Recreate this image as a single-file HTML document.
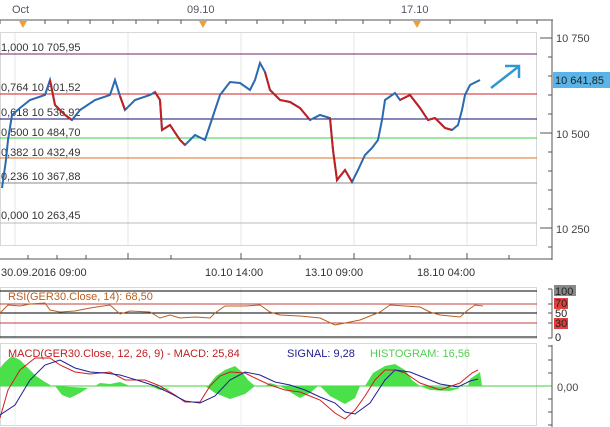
<!DOCTYPE html>
<html><head><meta charset="utf-8"><style>
body{margin:0;background:#fff;width:610px;height:427px;overflow:hidden}
svg{display:block}
text{font-family:"Liberation Sans","DejaVu Sans",sans-serif;font-size:11px}
</style></head><body>
<svg width="610" height="427" viewBox="0 0 610 427">
<!-- top axis -->
<text x="12" y="13" fill="#556">Oct</text>
<text x="187" y="13" fill="#556">09.10</text>
<text x="401" y="13" fill="#556">17.10</text>
<line x1="0" y1="20" x2="553" y2="20" stroke="#555"/>
<line x1="552" y1="20" x2="552" y2="260" stroke="#555"/>
<g stroke="#555">
<line x1="45" y1="20" x2="45" y2="24"/><line x1="68" y1="20" x2="68" y2="24"/><line x1="90" y1="20" x2="90" y2="24"/><line x1="113" y1="20" x2="113" y2="24"/><line x1="136" y1="20" x2="136" y2="24"/><line x1="158" y1="20" x2="158" y2="24"/><line x1="181" y1="20" x2="181" y2="24"/><line x1="226" y1="20" x2="226" y2="24"/><line x1="257" y1="20" x2="257" y2="24"/><line x1="283" y1="20" x2="283" y2="24"/><line x1="305" y1="20" x2="305" y2="24"/><line x1="336" y1="20" x2="336" y2="24"/><line x1="363" y1="20" x2="363" y2="24"/><line x1="390" y1="20" x2="390" y2="24"/><line x1="450" y1="20" x2="450" y2="24"/><line x1="485" y1="20" x2="485" y2="24"/><line x1="517" y1="20" x2="517" y2="24"/><line x1="537" y1="20" x2="537" y2="24"/>
<line x1="0" y1="20" x2="0" y2="24"/>
</g>
<g fill="#f0a030"><path d="M19 21h8l-4 7z"/><path d="M199 21h8l-4 7z"/><path d="M413 21h8l-4 7z"/></g>
<!-- main panel -->
<rect x="0.5" y="32.5" width="536" height="213" fill="#fff" stroke="#d8d8d8"/>
<g stroke="#e4e4e4"><line x1="15" y1="33" x2="15" y2="245"/><line x1="128" y1="33" x2="128" y2="245"/><line x1="241" y1="33" x2="241" y2="245"/><line x1="354" y1="33" x2="354" y2="245"/><line x1="467" y1="33" x2="467" y2="245"/></g>
<line x1="0" y1="54" x2="537" y2="54" stroke="#702070"/>
<line x1="0" y1="94" x2="537" y2="94" stroke="#d02020"/>
<line x1="0" y1="119" x2="537" y2="119" stroke="#101070"/>
<line x1="0" y1="138" x2="537" y2="138" stroke="#40d040"/>
<line x1="0" y1="158" x2="537" y2="158" stroke="#e07020"/>
<line x1="0" y1="183" x2="537" y2="183" stroke="#888"/>
<line x1="0" y1="223" x2="537" y2="223" stroke="#bbb"/>
<g fill="#333"><text x="1" y="51">1,000 10 705,95</text><text x="1" y="91">0,764 10 601,52</text><text x="1" y="116">0,618 10 536,92</text><text x="1" y="136">0,500 10 484,70</text><text x="1" y="156">0,382 10 432,49</text><text x="1" y="180">0,236 10 367,88</text><text x="1" y="219">0,000 10 263,45</text></g>
<polyline fill="none" stroke="#2a6ab0" stroke-width="2" points="2,188 6,160 8,140 12,115 20,108 30,100 45,95 50,80 55,105 65,115 72,120 80,110 95,100 110,95 115,80 120,96 125,110 135,100 150,95 155,92 160,100 162,130 170,125 180,140 185,145 195,135 205,140 210,125 215,110 220,95 230,82 240,83 250,90 255,80 260,63 265,72 270,90 280,100 290,102 300,108 310,120 320,115 330,118 333,150 337,180 345,170 352,182 358,170 365,155 372,148 378,140 382,120 385,100 395,93 400,100 410,95 420,108 428,120 435,118 445,128 452,130 458,125 462,110 465,95 470,85 480,80"/>
<g stroke="#c02020" stroke-width="2" fill="none"><polyline points="50,80 55,105 65,115 72,120"/><polyline points="120,96 125,110"/><polyline points="155,92 160,100 162,130 170,125 180,140 185,145"/><polyline points="265,72 270,90 280,100 290,102 300,108 310,120"/><polyline points="330,118 333,150 337,180 345,170 352,182"/><polyline points="400,100 410,95 420,108 428,120 435,118 445,128 452,130"/></g>
<g stroke="#3098d0" stroke-width="2.5" fill="none"><line x1="491" y1="88" x2="518" y2="67"/><path d="M505 66h14v12"/></g>
<!-- right axis -->
<g stroke="#555"><line x1="540" y1="38" x2="552" y2="38"/><line x1="540" y1="133" x2="552" y2="133"/><line x1="540" y1="228" x2="552" y2="228"/>
<line x1="548" y1="57" x2="552" y2="57"/><line x1="548" y1="76" x2="552" y2="76"/><line x1="548" y1="95" x2="552" y2="95"/><line x1="548" y1="114" x2="552" y2="114"/><line x1="548" y1="152" x2="552" y2="152"/><line x1="548" y1="171" x2="552" y2="171"/><line x1="548" y1="190" x2="552" y2="190"/><line x1="548" y1="209" x2="552" y2="209"/><line x1="548" y1="247" x2="552" y2="247"/></g>
<g fill="#444"><text x="556" y="42">10 750</text><text x="556" y="138">10 500</text><text x="556" y="233">10 250</text></g>
<rect x="553" y="72" width="57" height="16" fill="#5ab4e8"/>
<text x="555" y="84" fill="#222">10 641,85</text>
<!-- time axis -->
<line x1="0" y1="259" x2="552" y2="259" stroke="#555"/>
<g stroke="#555"><line x1="28" y1="255" x2="28" y2="259"/><line x1="57" y1="255" x2="57" y2="259"/><line x1="86" y1="255" x2="86" y2="259"/><line x1="128" y1="253" x2="128" y2="259"/><line x1="171" y1="255" x2="171" y2="259"/><line x1="241" y1="253" x2="241" y2="259"/><line x1="300" y1="255" x2="300" y2="259"/><line x1="354" y1="253" x2="354" y2="259"/><line x1="410" y1="255" x2="410" y2="259"/><line x1="467" y1="253" x2="467" y2="259"/><line x1="509" y1="255" x2="509" y2="259"/></g>
<g fill="#333"><text x="1" y="276">30.09.2016 09:00</text><text x="205" y="276">10.10 14:00</text><text x="305" y="276">13.10 09:00</text><text x="417" y="276">18.10 04:00</text></g>
<!-- RSI -->
<rect x="0.5" y="287.5" width="536" height="51" fill="#fff" stroke="#d8d8d8"/>
<line x1="15" y1="288" x2="15" y2="338" stroke="#eee"/><line x1="241" y1="288" x2="241" y2="338" stroke="#eee"/><line x1="467" y1="288" x2="467" y2="338" stroke="#eee"/>
<line x1="0" y1="291" x2="537" y2="291" stroke="#000"/>
<line x1="0" y1="304" x2="537" y2="304" stroke="#c04040"/>
<line x1="0" y1="313" x2="537" y2="313" stroke="#000"/>
<line x1="0" y1="323" x2="537" y2="323" stroke="#c04040"/>
<line x1="0" y1="337" x2="537" y2="337" stroke="#000"/>
<polyline fill="none" stroke="#b86020" points="0,313 8,305 20,306 30,304 45,303 50,310 60,312 75,311 90,308 110,305 120,314 130,311 150,312 160,318 170,315 180,318 195,317 210,318 215,313 225,306 245,306 260,305 270,312 280,315 300,316 320,318 335,325 345,323 360,320 370,316 380,312 390,305 405,306 420,307 430,312 440,315 450,316 460,317 468,310 475,305 483,306"/>
<text x="8" y="300" fill="#b86020">RSI(GER30.Close, 14): 68,50</text>
<g stroke="#555"><line x1="552" y1="289" x2="552" y2="338"/><line x1="548" y1="289" x2="552" y2="289"/><line x1="548" y1="304" x2="552" y2="304"/><line x1="548" y1="313" x2="552" y2="313"/><line x1="548" y1="323" x2="552" y2="323"/><line x1="548" y1="338" x2="552" y2="338"/></g>
<rect x="554" y="285" width="22" height="11" fill="#888"/>
<rect x="554" y="318" width="14" height="11" fill="#888"/>
<rect x="554" y="298" width="14" height="11" fill="#e04040"/>
<rect x="554" y="318" width="14" height="11" fill="#e04040"/>
<g fill="#222" style="font-size:10.5px"><text x="555" y="295">100</text><text x="555" y="307">70</text><text x="555" y="317">50</text><text x="555" y="327">30</text><text x="555" y="341">0</text></g>
<!-- MACD -->
<rect x="0.5" y="343.5" width="536" height="82" fill="#fff" stroke="#d8d8d8"/>
<line x1="15" y1="344" x2="15" y2="426" stroke="#eee"/><line x1="241" y1="344" x2="241" y2="426" stroke="#eee"/><line x1="467" y1="344" x2="467" y2="426" stroke="#eee"/>
<line x1="0" y1="386" x2="552" y2="386" stroke="#40d040"/>
<g fill="#4ae04a">
<path d="M0 386V368L5 362L12 356L20 360L28 368L36 376L45 382L52 386Z"/>
<path d="M55 386L62 395L70 398L80 393L88 388Z"/>
<path d="M95 386L100 383L110 384L120 382L130 386Z"/>
<path d="M150 386L160 390L170 389Z"/>
<path d="M205 386L215 393L230 399L245 394L255 386Z"/>
<path d="M265 386L270 383L280 386Z"/>
<path d="M208 386L216 376L225 370L235 366L242 372L248 380L255 386Z"/>
<path d="M280 386L290 392L300 398L310 393L318 386Z"/>
<path d="M320 386L330 396L345 404L355 398L360 386Z"/>
<path d="M365 386L373 373L385 366L395 364L405 370L412 380L420 386Z"/>
<path d="M420 386L430 390L450 391L460 388Z"/>
<path d="M468 386L470 379L480 372L482 386Z"/>
</g>
<polyline fill="none" stroke="#d02020" points="0,418 8,390 20,370 35,358 50,358 60,365 75,372 90,374 110,372 125,380 145,380 160,386 175,395 185,402 200,402 210,386 220,376 230,372 245,373 255,378 270,385 285,390 300,392 320,400 335,413 345,419 355,410 365,396 375,380 385,370 395,370 405,373 420,383 440,390 460,383 472,373 478,370"/>
<polyline fill="none" stroke="#202090" points="0,415 15,405 30,380 45,365 60,360 75,368 90,372 105,373 120,375 140,381 155,386 170,393 185,401 200,403 215,396 230,380 245,372 260,375 275,382 290,385 305,390 320,397 335,403 345,412 355,414 370,403 385,380 395,370 410,372 425,378 440,384 458,387 470,381 478,379"/>
<text x="8" y="357" fill="#c02020">MACD(GER30.Close, 12, 26, 9) -  MACD: 25,84</text>
<text x="287" y="357" fill="#202090">SIGNAL: 9,28</text>
<text x="370" y="357" fill="#50d050">HISTOGRAM: 16,56</text>
<g stroke="#555"><line x1="552" y1="345" x2="552" y2="427"/><line x1="548" y1="346" x2="552" y2="346"/><line x1="548" y1="360" x2="552" y2="360"/><line x1="548" y1="373" x2="552" y2="373"/><line x1="548" y1="399" x2="552" y2="399"/><line x1="548" y1="412" x2="552" y2="412"/><line x1="548" y1="425" x2="552" y2="425"/></g>
<text x="557" y="391" fill="#444">0,00</text>
</svg>
</body></html>
